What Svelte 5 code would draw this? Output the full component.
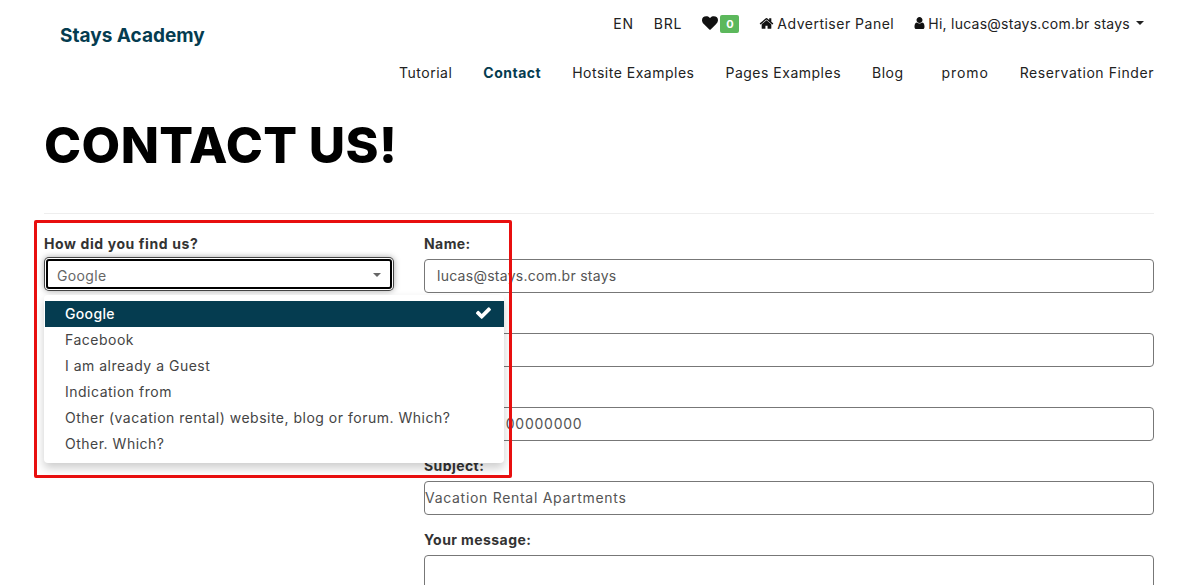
<script>
  const topItems = ['Tutorial', 'Contact', 'Hotsite Examples', 'Pages Examples', 'Blog', 'promo', 'Reservation Finder'];
  const options = ['Google', 'Facebook', 'I am already a Guest', 'Indication from', 'Other (vacation rental) website, blog or forum. Which?', 'Other. Which?'];
</script>

<div class="page">
  <header class="header">
    <a class="brand" href="#top">Stays Academy</a>
    <div class="navs">
      <div class="util">
        <span class="short">EN</span>
        <span class="short">BRL</span>
        <span class="fav">
          <svg class="ic heart" viewBox="0 0 1792 1792"><path d="M896 1664q-26 0-44-18l-624-602q-10-8-27.5-26t-55.5-65.5-68-97.5-53.5-121-23.5-138q0-220 127-344t351-124q62 0 126.5 21.5t120 58 95.5 68.5 76 68q36-36 76-68t95.5-68.5 120-58 126.5-21.5q224 0 351 124t127 344q0 221-229 450l-623 600q-18 18-44 18z"/></svg>
          <b class="badge">0</b>
        </span>
        <span class="withic">
          <svg class="ic" viewBox="0 0 1792 1792"><path d="M1472 992v480q0 26-19 45t-45 19h-384v-384h-256v384h-384q-26 0-45-19t-19-45v-480q0-1 .5-3t.5-3l575-474 575 474q1 2 1 6zm223-69l-62 74q-8 9-21 11h-3q-13 0-21-7l-692-577-692 577q-12 8-24 7-13-2-21-11l-62-74q-8-10-7-23.5t11-21.5l719-599q32-26 76-26t76 26l244 204v-195q0-14 9-23t23-9h192q14 0 23 9t9 23v408l219 182q10 8 11 21.5t-7 23.5z"/></svg>
          <span class="adv">Advertiser Panel</span>
        </span>
        <span class="withic">
          <svg class="ic user" viewBox="256 128 1280 1536"><path d="M1536 1399q0 109-62.5 187t-150.5 78h-854q-88 0-150.5-78t-62.5-187q0-85 8.5-160.5t31.5-152 58.5-131 94-89 134.5-34.5q131 128 313 128t313-128q76 0 134.5 34.5t94 89 58.5 131 31.5 152 8.5 160.5zm-256-887q0 159-112.5 271.5t-271.5 112.5-271.5-112.5-112.5-271.5 112.5-271.5 271.5-112.5 271.5 112.5 112.5 271.5z"/></svg>
          <span class="hi">Hi, lucas@stays.com.br stays</span>
          <i class="caret"></i>
        </span>
      </div>
      <nav class="menu">
        {#each topItems as item}
          <a href="#top" class:active={item === 'Contact'} class:promo={item === 'promo'} class:finder={item === 'Reservation Finder'}>{item}</a>
        {/each}
      </nav>
    </div>
  </header>

  <main class="main">
    <h1>CONTACT US!</h1>
    <hr />
    <div class="form">
      <div class="left">
        <span class="label wide">How did you find us?</span>
        <div class="select">
          <span>Google</span>
          <i class="caret grey"></i>
        </div>
      </div>
      <div class="right">
        <div class="group"><span class="label">Name:</span><div class="input name">lucas@stays.com.br stays</div></div>
        <div class="group"><span class="label">E-mail:</span><div class="input"></div></div>
        <div class="group"><span class="label">Phone:</span><div class="input phone">+55 (00) 00000000</div></div>
        <div class="group"><span class="label">Subject:</span><div class="input flush">Vacation Rental Apartments</div></div>
        <div class="group"><span class="label">Your message:</span><div class="input area"></div></div>
      </div>
    </div>
  </main>

  <ul class="dropdown">
    {#each options as o, i}
      <li class:selected={i === 0}>
        <span>{o}</span>
        {#if i === 0}
          <svg class="check" viewBox="128 352 1543 1130"><path d="M1671 566q0 40-28 68l-724 724-136 136q-28 28-68 28t-68-28l-136-136-362-362q-28-28-28-68t28-68l136-136q28-28 68-28t68 28l294 295 656-657q28-28 68-28t68 28l136 136q28 28 28 68z"/></svg>
        {/if}
      </li>
    {/each}
  </ul>

  <div class="annotation"></div>
</div>

<style>
  :global(body) {
    margin: 0;
    background: #fff;
  }
  .page {
    position: relative;
    height: 585px;
    overflow: hidden;
    font-family: Inter, "Liberation Sans", sans-serif;
    font-size: 14px;
    letter-spacing: 0.35px;
    color: #333;
  }
  .header {
    display: flex;
    justify-content: space-between;
    height: 100px;
    padding: 0 50px 0 60px;
  }
  .brand {
    margin-top: 24px;
    font-size: 19px;
    line-height: 23px;
    font-weight: 700;
    letter-spacing: 0;
    color: #053c50;
    text-decoration: none;
  }
  .navs {
    display: flex;
    flex-direction: column;
    align-items: flex-end;
  }
  .util {
    display: flex;
    align-items: center;
    gap: 20px;
    height: 20px;
    margin-top: 13px;
    padding-right: 10px;
    color: #222;
  }
  .short {
    letter-spacing: 0.8px;
  }
  .fav,
  .withic {
    display: flex;
    align-items: center;
  }
  .withic {
    gap: 3px;
  }
  .adv {
    letter-spacing: 0.5px;
  }
  .hi {
    letter-spacing: 0.25px;
  }
  .ic {
    width: 15px;
    height: 15px;
    fill: #111;
    flex: none;
  }
  .heart {
    width: 16px;
    height: 16px;
    margin-right: 2px;
  }
  .user {
    width: 11px;
    height: 12px;
  }
  .badge {
    display: block;
    width: 19px;
    height: 18px;
    margin-top: 1px;
    border-radius: 2px;
    background: #5cb85c;
    color: #fff;
    font-size: 11px;
    line-height: 18px;
    text-align: center;
    letter-spacing: 0;
  }
  .caret {
    width: 0;
    height: 0;
    margin-left: 3px;
    border-left: 4px solid transparent;
    border-right: 4px solid transparent;
    border-top: 4px solid #222;
  }
  .caret.grey {
    margin: 0;
    border-top-color: #666;
  }
  .menu {
    display: flex;
    gap: 31px;
    margin-top: 30px;
    line-height: 20px;
    letter-spacing: 0.5px;
  }
  .menu a {
    color: #222;
    text-decoration: none;
  }
  .menu a.active {
    font-weight: 700;
    color: #053c50;
  }
  .menu a.promo {
    margin-left: 7px;
    letter-spacing: 0.9px;
  }
  .menu a.finder {
    letter-spacing: 0.56px;
  }
  .main {
    padding: 0 50px 0 44px;
  }
  h1 {
    margin: 0;
    height: 113px;
    font-size: 50px;
    line-height: 90px;
    font-weight: 800;
    letter-spacing: 0.4px;
    color: #000;
  }
  hr {
    margin: 0 0 20px;
    border: 0;
    border-top: 1px solid #eee;
  }
  .form {
    display: flex;
    gap: 30px;
  }
  .left {
    flex: none;
    width: 350px;
  }
  .right {
    flex: 1;
  }
  .label {
    display: block;
    height: 20px;
    margin-bottom: 5px;
    line-height: 20px;
    font-weight: 700;
    letter-spacing: 0.42px;
  }
  .label.wide {
    letter-spacing: 0.6px;
  }
  .group {
    margin-bottom: 15px;
  }
  .input {
    box-sizing: border-box;
    height: 34px;
    padding: 0 12px;
    border: 1px solid #777;
    border-radius: 4px;
    line-height: 32px;
    color: #555;
    background: #fff;
  }
  .input.name {
    letter-spacing: 0.27px;
  }
  .input.phone {
    letter-spacing: 0.75px;
  }
  .input.flush {
    padding: 0;
    letter-spacing: 0.7px;
  }
  .input.area {
    height: 80px;
  }
  .select {
    box-sizing: border-box;
    display: flex;
    align-items: center;
    justify-content: space-between;
    height: 30px;
    margin: 2px;
    padding: 2px 9px 0;
    border: 2px solid #000;
    border-radius: 3px;
    color: #666;
    background: #fff;
    box-shadow: 0 0 0 1px #fff, 0 0 0 2px #444, 0 0 6px 2px rgba(0, 0, 0, 0.35);
  }
  .dropdown {
    position: absolute;
    left: 44px;
    top: 295px;
    box-sizing: border-box;
    width: 460px;
    margin: 0;
    padding: 6px 0 6px 1px;
    list-style: none;
    letter-spacing: 0.5px;
    background: #fff;
    border-radius: 4px;
    box-shadow: 0 5px 10px rgba(0, 0, 0, 0.2);
  }
  .dropdown li {
    box-sizing: border-box;
    display: flex;
    align-items: center;
    justify-content: space-between;
    height: 26px;
    padding: 0 13px 2px 20px;
    color: #444;
  }
  .dropdown li.selected {
    background: #053c50;
    color: #fff;
    font-weight: 500;
    letter-spacing: 0.35px;
  }
  .check {
    width: 15px;
    height: 12px;
    fill: #fff;
  }
  .annotation {
    position: absolute;
    left: 34px;
    top: 220px;
    box-sizing: border-box;
    width: 478px;
    height: 258px;
    border: 3px solid #e80f0f;
    border-radius: 2px;
    pointer-events: none;
  }
</style>
